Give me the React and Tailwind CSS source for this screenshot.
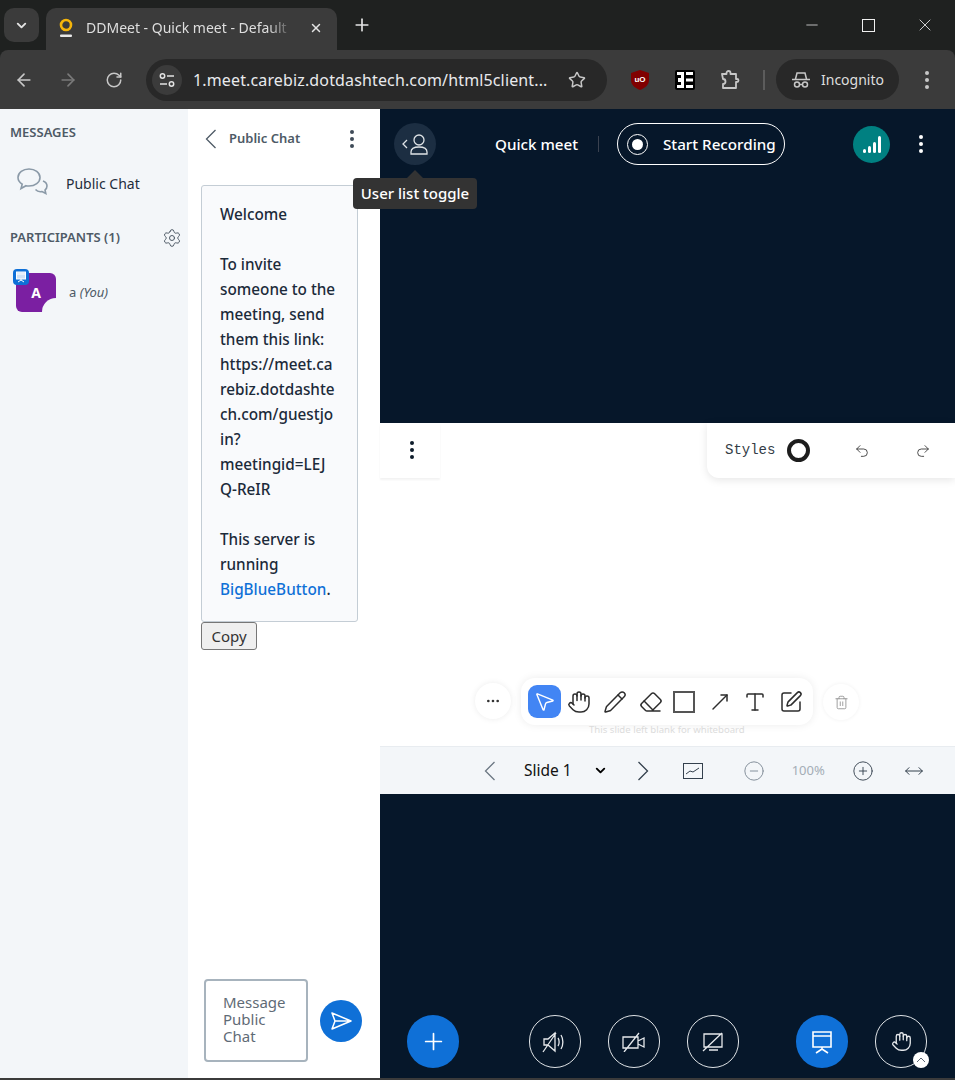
import React from 'react';
import { ChevronDown, ArrowLeft, ArrowRight, RotateCw, Star, Plus, X, Minus, Settings, MousePointer2, Hand, Pencil, Eraser, MoveUpRight, Type, SquarePen, Trash2, Undo2, Redo2, CirclePlus, CircleMinus, MoveHorizontal, Ellipsis } from 'lucide-react';

function Dots({ className }) {
  return (
    <div className={`flex flex-col items-center gap-[3px] ${className}`}>
      <span className="w-[4px] h-[4px] rounded-full bg-current" />
      <span className="w-[4px] h-[4px] rounded-full bg-current" />
      <span className="w-[4px] h-[4px] rounded-full bg-current" />
    </div>
  );
}

// long thin chevrons, lucide's are too short for these
function Chevron({ right, className }) {
  return (
    <svg width="12" height="20" viewBox="0 0 12 20" fill="none" stroke="currentColor" strokeWidth="1.300" className={className}>
      <path d={right ? 'M1.500 1l9 9-9 9' : 'M10.500 1l-9 9 9 9'} />
    </svg>
  );
}

function BrowserChrome() {
  return (
    <div className="shrink-0 bg-[#1f2120] font-['Noto_Sans',sans-serif]">
      <div className="h-[50px] flex items-end relative">
        <div className="w-[35px] h-[34px] ml-[4px] mb-[8px] rounded-[10px] bg-[#3b3b3b] flex items-center justify-center">
          <ChevronDown size={15} strokeWidth={3} className="text-[#e3e3e3]" />
        </div>
        <div className="ml-[7px] w-[291px] h-[42px] bg-[#3b3b3b] rounded-t-[10px] flex items-center pl-[13px] pb-[3px]">
          <svg width="14" height="20" viewBox="0 0 14 20" fill="none">
            <circle cx="7" cy="7" r="5" stroke="#f5b50a" strokeWidth="2.600" />
            <rect x="1" y="16.500" width="12" height="2.400" rx="1" fill="#e8e8e8" />
          </svg>
          <span className="ml-[13px] w-[207px] overflow-hidden whitespace-nowrap text-[14px] text-[#dedede] [mask-image:linear-gradient(to_right,black_88%,transparent)]">DDMeet - Quick meet - Default</span>
          <X size={14} strokeWidth={2.500} className="ml-[16px] text-[#e3e3e3]" />
        </div>
        <Plus size={20} strokeWidth={2} className="ml-[15px] mb-[15px] text-[#e3e3e3]" />
        <div className="ml-auto flex items-center mb-[15px] text-[#f0f0f0]">
          <Minus size={18} strokeWidth={1} className="mr-[41px]" />
          <div className="w-[13px] h-[13px] border border-[#f0f0f0] mr-[40px]" />
          <X size={20} strokeWidth={1} className="mr-[20px]" />
        </div>
      </div>
      <div className="h-[59px] bg-[#3b3b3b] rounded-t-[8px] flex items-center text-[#c7c7c7]">
        <ArrowLeft size={20} strokeWidth={2} className="ml-[14px]" />
        <ArrowRight size={20} strokeWidth={2} className="ml-[24px] text-[#7a7a7a]" />
        <RotateCw size={18} strokeWidth={2} className="ml-[27px]" />
        <div className="ml-[23px] w-[461px] h-[42px] bg-[#282828] rounded-full flex items-center">
          <div className="ml-[6px] w-[30px] h-[30px] rounded-full bg-[#3b3b3b] flex items-center justify-center">
            <svg width="16" height="14" viewBox="0 0 16 14" fill="none" stroke="#e3e3e3" strokeWidth="1.500">
              <circle cx="3.500" cy="3" r="2.200" />
              <path d="M8 3h7M1 11h7" />
              <circle cx="12.500" cy="11" r="2.200" />
            </svg>
          </div>
          <span className="ml-[11px] text-[16px] tracking-[0.14px] text-[#e8eaed] whitespace-nowrap w-[355px]">1.meet.carebiz.dotdashtech.com/html5client...</span>
          <Star size={18} strokeWidth={2} className="ml-[20px]" />
        </div>
        <svg width="20" height="22" viewBox="0 0 20 22" className="ml-[23px]">
          <path d="M10 1l9 3v7c0 5-4 8-9 10C5 19 1 16 1 11V4z" fill="#800000" />
          <text x="10" y="13" textAnchor="middle" fontSize="8" fontWeight="700" fill="#fff" fontFamily="Liberation Sans">uO</text>
        </svg>
        <svg width="20" height="20" viewBox="0 0 20 20" className="ml-[25px]">
          <rect width="20" height="20" rx="2" fill="#000" />
          <path d="M2 2h7v16H2v-3h4v-3H3V8h3V5H2zM11 2h7v3h-7zM11 8.500h7v3h-7zM11 15h7v3h-7z" fill="#fff" />
        </svg>
        <svg width="20" height="20" viewBox="0 0 20 20" fill="none" stroke="currentColor" strokeWidth="1.800" strokeLinejoin="round" className="ml-[25px]">
          <path d="M2 4h4.500V3a2 2 0 014 0v1H16v5h1a1.500 1.500 0 010 3h-1v6H3v-4a2.500 2.500 0 000-5z" />
        </svg>
        <span className="ml-[23px] w-[2px] h-[20px] bg-[#5c5c5c]" />
        <div className="ml-[11px] w-[123px] h-[41px] bg-[#282828] rounded-full flex items-center pl-[16px] text-[#c7c7c7]">
          <svg width="18" height="16" viewBox="0 0 18 16" fill="none" stroke="currentColor" strokeWidth="1.500">
            <path d="M0 7.500h18M3.500 7l1.500-6h8l1.500 6" />
            <circle cx="5" cy="12.500" r="2.500" />
            <circle cx="13" cy="12.500" r="2.500" />
            <path d="M7.500 12.500h3" />
          </svg>
          <span className="ml-[11px] text-[14px] text-[#dedede]">Incognito</span>
        </div>
        <Dots className="ml-[26px] text-[#c7c7c7]" />
      </div>
    </div>
  );
}

function MessageBox() {
  const lines = ['Welcome', '', 'To invite', 'someone to the', 'meeting, send', 'them this link:', 'https://meet.ca', 'rebiz.dotdashte', 'ch.com/guestjo', 'in?', 'meetingid=LEJ', 'Q-ReIR', '', 'This server is', 'running'];
  return (
    <div className="ml-[13px] w-[157px] h-[437px] bg-[#f9fafc] border border-[#c4cdd5] rounded-[3px] pl-[18px] pt-[16px] text-[15.3px] leading-[25px] font-medium text-[#1c2a3a] whitespace-nowrap">
      {lines.map((l, i) => <div key={i} className="h-[25px]">{l}</div>)}
      <div className="h-[25px]"><span className="text-[#0f70d7]">BigBlueButton</span>.</div>
    </div>
  );
}

function Sidebar() {
  return (
    <div className="w-[188px] shrink-0 bg-[#f3f6f9] pt-[14px]">
      <div className="pl-[10px] text-[13px] leading-[18px] font-semibold text-[#4e5a66]">MESSAGES</div>
      <div className="flex items-center pl-[17px] mt-[25px] h-[34px]">
        <svg width="32" height="32" viewBox="0 0 32 32" fill="none" stroke="#8b9aa8" strokeWidth="1.600">
          <path d="M12 2c6 0 11 3.500 11 8.500S18 19 12 19c-1 0-2 0-3-.3L4 21.500l1.200-4.300C2.500 15.500 1 13.200 1 10.500 1 5.500 6 2 12 2z" />
          <path d="M26 14c2.500 1 4 3 4 5 0 1.600-.8 3-2 4l.8 3.500-3.800-2c-2.500.5-5-.3-6.500-2" />
        </svg>
        <span className="ml-[17px] text-[14px] text-[#1f2d3d]">Public Chat</span>
      </div>
      <div className="flex items-center justify-between pl-[10px] pr-[6px] mt-[29px] h-[18px]">
        <span className="text-[13px] font-semibold text-[#4e5a66] whitespace-nowrap">PARTICIPANTS (1)</span>
        <Settings size={20} strokeWidth={1.200} className="text-[#4e5a66]" />
      </div>
      <div className="flex items-center pl-[16px] mt-[26px]">
        <div className="relative w-[40px] h-[39px] bg-[#7b1fa2] rounded-[6px] flex items-center justify-center text-white text-[14px] font-bold">
          A
          <span className="absolute right-0 bottom-0 w-[14px] h-[14px] bg-[#f3f6f9] rounded-tl-full" />
          <span className="absolute left-[-3px] top-[-4px] w-[16px] h-[16px] rounded-[4px] bg-[#0f70d7] flex items-center justify-center">
            <svg width="12" height="12" viewBox="0 0 12 12" fill="none" stroke="#fff" strokeWidth="1">
              <rect x="1.500" y="1" width="9" height="7" fill="#cfe2f7" />
              <path d="M1.500 3h9M6 8v1M3 11l3-2 3 2" />
            </svg>
          </span>
        </div>
        <span className="ml-[13px] text-[13px] text-[#4e5a66]">a <em>(You)</em></span>
      </div>
    </div>
  );
}

function ChatPanel() {
  return (
    <div className="w-[192px] shrink-0 bg-white flex flex-col">
      <div className="flex items-center h-[58px] pt-[2px] pl-[17px]">
        <Chevron className="text-[#4e5a66]" />
        <span className="ml-[12px] text-[13px] font-semibold text-[#4e5a66]">Public Chat</span>
        <Dots className="ml-auto mr-[26px] text-[#3f4b58]" />
      </div>
      <div className="mt-[18px]"><MessageBox /></div>
      <button type="button" className="ml-[13px] w-[56px] h-[28px] bg-[#efefef] border border-[#767676] rounded-[3px] text-[15px] text-[#333]">Copy</button>
      <div className="mt-auto flex items-center pl-[16px] pb-[16px]">
        <div className="w-[104px] h-[83px] border-2 border-[#a7b3bd] rounded-[4px] pl-[17px] pt-[13px] text-[15px] leading-[17px] text-[#5f6b76]">
          Message<br />Public<br />Chat
        </div>
        <div className="ml-[12px] w-[42px] h-[42px] rounded-full bg-[#0f70d7] flex items-center justify-center">
          <svg width="22" height="20" viewBox="0 0 22 20" fill="none" stroke="#fff" strokeWidth="1.500" strokeLinejoin="round">
            <path d="M2 2l19 8-19 8 3-8zM5 10h16" />
          </svg>
        </div>
      </div>
    </div>
  );
}

function TopBar() {
  return (
    <div className="relative h-[314px] bg-[#06172a] pt-[14px] text-white">
      <div className="flex items-center h-[42px]">
        <div className="ml-[14px] w-[42px] h-[42px] rounded-full bg-[#1c2e42] flex items-center justify-center">
          <svg width="30" height="22" viewBox="0 0 30 22" fill="none" stroke="#dfe3e6" strokeWidth="1.300">
            <path d="M7 7l-4 4 4 4" />
            <circle cx="19" cy="7" r="5" />
            <path d="M19 14c-5 0-8 1.500-8 5v2h16v-2c0-3.500-3-5-8-5z" />
          </svg>
        </div>
        <span className="ml-[59px] w-[84px] text-[15.2px] font-medium whitespace-nowrap">Quick meet</span>
        <span className="ml-[19px] w-[1px] h-[16px] bg-[#3a4250]" />
        <div className="ml-[18px] w-[168px] h-[42px] rounded-full border border-white flex items-center pl-[9px]">
          <span className="w-[21px] h-[21px] rounded-full border-[1.500px] border-white flex items-center justify-center">
            <span className="w-[11px] h-[11px] rounded-full bg-white" />
          </span>
          <span className="ml-[15px] text-[15.2px] font-medium whitespace-nowrap">Start Recording</span>
        </div>
        <div className="ml-[68px] w-[37px] h-[37px] rounded-full bg-[#008081] flex items-end justify-center gap-[2px] pb-[10px]">
          <span className="w-[3px] h-[4px] bg-white rounded-sm" />
          <span className="w-[3px] h-[7px] bg-white rounded-sm" />
          <span className="w-[3px] h-[11px] bg-white rounded-sm" />
          <span className="w-[3px] h-[17px] bg-white rounded-sm" />
        </div>
        <Dots className="ml-[29px] text-white" />
      </div>
      <div className="absolute left-[-27px] top-[69px] w-[124px] h-[31px] bg-[#333333] rounded-[4px] flex items-center justify-center text-[15px] font-medium text-white whitespace-nowrap">
        <span className="absolute left-[54px] top-[-8px] w-0 h-0 border-x-[8px] border-x-transparent border-b-[8px] border-b-[#333333]" />
        User list toggle
      </div>
    </div>
  );
}

function Whiteboard() {
  return (
    <div className="relative h-[323px] bg-white">
      <div className="absolute left-0 top-0 w-[60px] h-[55px] pb-[1px] bg-white shadow-[0_2px_2px_rgba(0,0,0,0.05)] flex items-center justify-center pl-[4px]">
        <Dots className="text-[#0e1c2b]" />
      </div>
      <div className="absolute right-0 top-0 w-[248px] h-[55px] bg-white rounded-bl-[12px] shadow-[0_2px_8px_rgba(0,0,0,0.1)] flex items-center pl-[18px]">
        <span className="font-['Liberation_Mono',monospace] text-[14px] text-[#333c46]">Styles</span>
        <span className="ml-[12px] w-[23px] h-[23px] rounded-full border-[4px] border-[#1d1d1d]" />
        <Undo2 size={16} strokeWidth={1.300} className="ml-[44px] text-[#333]" />
        <Redo2 size={16} strokeWidth={1.300} className="ml-[45px] text-[#333]" />
      </div>
      <div className="absolute left-[95px] top-[260px] w-[36px] h-[36px] rounded-full bg-white shadow-[0_0_6px_rgba(0,0,0,0.08)] flex items-center justify-center">
        <Ellipsis size={16} className="text-[#333]" />
      </div>
      <div className="absolute left-[141px] top-[255px] w-[292px] h-[47px] rounded-[14px] bg-white shadow-[0_0_8px_rgba(0,0,0,0.08)] flex items-center pl-[7px] text-[#2d2d2d]">
        <div className="w-[33px] h-[33px] rounded-[9px] bg-[#4285f4] flex items-center justify-center">
          <MousePointer2 size={23} strokeWidth={1.500} className="text-white" />
        </div>
        <Hand size={24} strokeWidth={1.500} className="ml-[6px]" />
        <Pencil size={24} strokeWidth={1.500} className="ml-[12px]" />
        <Eraser size={24} strokeWidth={1.500} className="ml-[12px]" />
        <div className="ml-[10px] w-[22px] h-[22px] border-2 border-[#555]" />
        <MoveUpRight size={24} strokeWidth={1.500} className="ml-[13px]" />
        <Type size={24} strokeWidth={1.500} className="ml-[11px]" />
        <SquarePen size={24} strokeWidth={1.500} className="ml-[12px]" />
      </div>
      <div className="absolute left-[443px] top-[261px] w-[36px] h-[36px] rounded-full bg-white shadow-[0_0_4px_rgba(0,0,0,0.06)] flex items-center justify-center">
        <Trash2 size={15} strokeWidth={1.300} className="text-[#8a8a8a]" />
      </div>
      <div className="absolute left-[209px] top-[300px] text-[9.600px] text-[#dcdcdc] whitespace-nowrap">This slide left blank for whiteboard</div>
    </div>
  );
}

function SlideBar() {
  return (
    <div className="h-[48px] shrink-0 bg-[#f3f6f9] border-t border-[#e8ecf0] flex items-center text-[#33404d]">
      <Chevron className="ml-[104px] text-[#6b7783]" />
      <span className="ml-[28px] text-[15.5px] text-[#111] whitespace-nowrap">Slide 1</span>
      <ChevronDown size={15} strokeWidth={3} className="ml-[21px] text-black" />
      <Chevron right className="ml-[29px]" />
      <svg width="20" height="16" viewBox="0 0 20 16" fill="none" stroke="#33404d" strokeWidth="1" className="ml-[34px]">
        <rect x="0.500" y="0.500" width="19" height="15" />
        <path d="M3 11l4-3 3 1 6-4" />
      </svg>
      <CircleMinus size={22} strokeWidth={1} className="ml-[40px] text-[#7c8894]" />
      <span className="ml-[27px] text-[13px] text-[#a4adb6]">100%</span>
      <CirclePlus size={22} strokeWidth={1} className="ml-[27px]" />
      <MoveHorizontal size={20} strokeWidth={1.200} className="ml-[30px]" />
    </div>
  );
}

function RoundButton({ filled, children, className }) {
  return (
    <div className={`relative w-[52px] h-[53px] rounded-full flex items-center justify-center text-[#e6e9ec] ${filled ? 'bg-[#0f70d7] text-white' : 'border-[1.500px] border-[#dfe3e6]'} ${className}`}>
      {children}
    </div>
  );
}

function BottomBar() {
  return (
    <div className="flex-1 bg-[#06172a] flex items-end pb-[10px]">
      <RoundButton filled className="ml-[27px]"><Plus size={27} strokeWidth={1.500} /></RoundButton>
      <RoundButton className="ml-[70px]">
        <svg width="26" height="24" viewBox="0 0 26 24" fill="none" stroke="currentColor" strokeWidth="1.300">
          <path d="M2 9h4l7-6v18l-7-6H2zM1 22L14 3M16 8c1.500 2 1.500 6 0 8M19 5c2.500 4 2.500 10 0 14" />
        </svg>
      </RoundButton>
      <RoundButton className="ml-[27px]">
        <svg width="24" height="20" viewBox="0 0 24 20" fill="none" stroke="currentColor" strokeWidth="1.300">
          <path d="M1 5h15v11H1zM16 9l6-3v9l-6-3M2 20L17 1" />
        </svg>
      </RoundButton>
      <RoundButton className="ml-[27px]">
        <svg width="22" height="20" viewBox="0 0 22 20" fill="none" stroke="currentColor" strokeWidth="1.300">
          <path d="M2 2h18v13H2zM7 18h9M1 19L20 1" />
        </svg>
      </RoundButton>
      <RoundButton filled className="ml-[57px]">
        <svg width="24" height="24" viewBox="0 0 24 24" fill="none" stroke="currentColor" strokeWidth="1.600">
          <path d="M3 2h18v15H3zM3 6h18M12 17v2M6 23l6-4 6 4" />
        </svg>
      </RoundButton>
      <RoundButton className="ml-[27px]">
        <Hand size={21} strokeWidth={1.500} />
        <span className="absolute right-[-3px] bottom-[-1px] w-[16px] h-[16px] rounded-full bg-white flex items-center justify-center">
          <svg width="10" height="6" viewBox="0 0 10 6" fill="none" stroke="#5b6673" strokeWidth="1"><path d="M1 5l4-4 4 4" /></svg>
        </span>
      </RoundButton>
    </div>
  );
}

export default function App() {
  return (
    <div className="w-[955px] h-[1080px] flex flex-col overflow-hidden bg-[#3b3b3b] font-['Noto_Sans',sans-serif]">
      <BrowserChrome />
      <div className="h-[969px] flex shrink-0">
        <Sidebar />
        <ChatPanel />
        <div className="flex-1 flex flex-col">
          <TopBar />
          <Whiteboard />
          <SlideBar />
          <BottomBar />
        </div>
      </div>
    </div>
  );
}
